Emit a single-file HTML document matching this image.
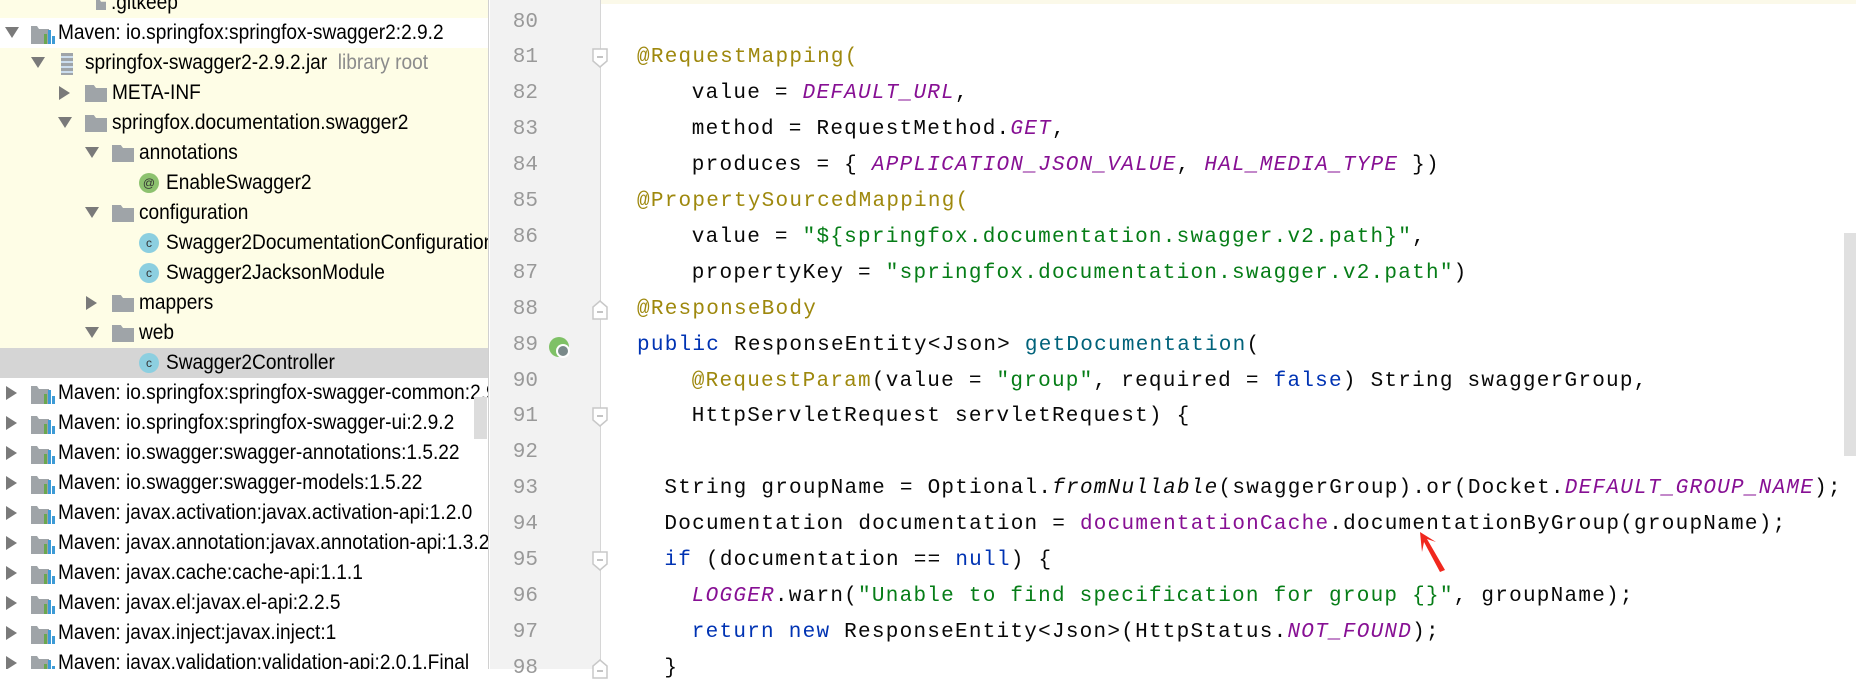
<!DOCTYPE html>
<html><head><meta charset="utf-8"><style>
*{margin:0;padding:0;box-sizing:border-box}
body{width:1856px;height:669px;overflow:hidden;background:#fff;position:relative;font-family:"Liberation Sans",sans-serif}
#tree{position:absolute;left:0;top:0;width:489px;height:669px;background:#fff;overflow:hidden;border-right:1px solid #d0d0d0}
.row{position:absolute;left:0;width:489px;height:30px}
.y{background:#fefde6}
.sel{background:#d5d5d5}
.t{position:absolute;top:2px;font-size:21px;line-height:26px;white-space:nowrap;transform:scaleX(.91);transform-origin:0 50%;color:#000}
.arr{position:absolute;top:9px;width:0;height:0}
.ad{border-left:7px solid transparent;border-right:7px solid transparent;border-top:11px solid #7a7a7a}
.ar{border-top:7px solid transparent;border-bottom:7px solid transparent;border-left:11px solid #7a7a7a;top:8px}
.fold{position:absolute;top:7px;width:22px;height:17px;background:#9fa4a8;clip-path:polygon(0 0,40% 0,50% 18%,100% 18%,100% 100%,0 100%)}
.mv{position:absolute;top:6px;width:24px;height:20px}
.ci{position:absolute;top:5px;width:20px;height:20px;border-radius:50%;background:#8ccfe0;font-size:12px;line-height:20px;text-align:center;color:#333}
.ai{background:#8dc26f}
#gut{position:absolute;left:490px;top:0;width:111px;height:669px;background:#f2f2f2;border-right:1px solid #d6d6d6}
.ln{position:absolute;left:490px;width:48px;text-align:right;font-family:"Liberation Mono",monospace;font-size:21px;color:#999;height:36px;line-height:36px}
.fm{position:absolute;left:592px}
.code{position:absolute;font-family:"Liberation Mono",monospace;font-size:21px;letter-spacing:1.25px;white-space:pre;height:36px;line-height:36px;color:#080808}
.an{color:#9e880d}.pu{color:#871094;font-style:italic}.pn{color:#871094}.st{color:#067d17}.kw{color:#0033b3}.fn{color:#00627a}
</style></head><body>
<div style="position:absolute;left:601px;top:0;width:1255px;height:4px;background:#fbf9e9"></div>
<div id="tree">
<div class="row y" style="top:-12px"><div class="fold" style="left:96px;width:10px;height:10px;top:12px"></div><div class="t" style="left:111px">.gitkeep</div></div>
<div class="row" style="top:18px"><div class="arr ad" style="left:5px"></div><svg class="mv" style="left:31px" viewBox="0 0 24 20"><path d="M0 2h6l2 3h10v15H0z" fill="#9fa4a8"/><rect x="13" y="10" width="3" height="10" fill="#6aa84f"/><rect x="17" y="6" width="3" height="14" fill="#3d9bd6"/><rect x="21" y="12" width="3" height="8" fill="#3d9bd6"/></svg><div class="t" style="left:58px">Maven: io.springfox:springfox-swagger2:2.9.2</div></div>
<div class="row y" style="top:48px"><div class="arr ad" style="left:31px"></div><div style="position:absolute;left:61px;top:5px;width:12px;height:22px;background:repeating-linear-gradient(#9fa4a8 0 3px,#cde 3px 5px)"></div><div class="t" style="left:85px">springfox-swagger2-2.9.2.jar&nbsp; <span style="color:#8c8c8c">library root</span></div></div>
<div class="row y" style="top:78px"><div class="arr ar" style="left:59px"></div><div class="fold" style="left:85px"></div><div class="t" style="left:112px">META-INF</div></div>
<div class="row y" style="top:108px"><div class="arr ad" style="left:58px"></div><div class="fold" style="left:85px"></div><div class="t" style="left:112px">springfox.documentation.swagger2</div></div>
<div class="row y" style="top:138px"><div class="arr ad" style="left:85px"></div><div class="fold" style="left:112px"></div><div class="t" style="left:139px">annotations</div></div>
<div class="row y" style="top:168px"><div class="ci ai" style="left:139px">@</div><div class="t" style="left:166px">EnableSwagger2</div></div>
<div class="row y" style="top:198px"><div class="arr ad" style="left:85px"></div><div class="fold" style="left:112px"></div><div class="t" style="left:139px">configuration</div></div>
<div class="row y" style="top:228px"><div class="ci" style="left:139px">c</div><div class="t" style="left:166px">Swagger2DocumentationConfiguration</div></div>
<div class="row y" style="top:258px"><div class="ci" style="left:139px">c</div><div class="t" style="left:166px">Swagger2JacksonModule</div></div>
<div class="row y" style="top:288px"><div class="arr ar" style="left:86px"></div><div class="fold" style="left:112px"></div><div class="t" style="left:139px">mappers</div></div>
<div class="row y" style="top:318px"><div class="arr ad" style="left:85px"></div><div class="fold" style="left:112px"></div><div class="t" style="left:139px">web</div></div>
<div class="row sel" style="top:348px"><div class="ci" style="left:139px">c</div><div class="t" style="left:166px">Swagger2Controller</div></div>
<div id="mrows"></div>
<div style="position:absolute;left:474px;top:397px;width:13px;height:42px;background:#dcdcdc"></div>
</div>
<div id="gut"></div>
<div style="position:absolute;left:1844px;top:233px;width:12px;height:223px;background:#e0e0e0"></div>
<svg style="position:absolute;left:1418px;top:530px" width="40" height="45" viewBox="0 0 40 45"><path d="M9 9 L27 40 L22 42 L6 12 L4 22 L2 2 L18 12 Z" fill="#f0281e"/></svg>
<svg style="position:absolute;left:548px;top:336px" width="24" height="24" viewBox="0 0 24 24"><circle cx="11" cy="11" r="10" fill="#7fc166"/><circle cx="15" cy="15" r="7" fill="#fff"/><circle cx="15" cy="15" r="5" fill="#7a8a8a"/></svg>
<script>
var mv=["Maven: io.springfox:springfox-swagger-common:2.9.2","Maven: io.springfox:springfox-swagger-ui:2.9.2","Maven: io.swagger:swagger-annotations:1.5.22","Maven: io.swagger:swagger-models:1.5.22","Maven: javax.activation:javax.activation-api:1.2.0","Maven: javax.annotation:javax.annotation-api:1.3.2","Maven: javax.cache:cache-api:1.1.1","Maven: javax.el:javax.el-api:2.2.5","Maven: javax.inject:javax.inject:1","Maven: javax.validation:validation-api:2.0.1.Final"];
var h="";mv.forEach(function(s,i){h+='<div class="row" style="top:'+(378+30*i)+'px"><div class="arr ar" style="left:6px"></div><svg class="mv" style="left:31px" viewBox="0 0 24 20"><path d="M0 2h6l2 3h10v15H0z" fill="#9fa4a8"/><rect x="13" y="10" width="3" height="10" fill="#6aa84f"/><rect x="17" y="6" width="3" height="14" fill="#3d9bd6"/><rect x="21" y="12" width="3" height="8" fill="#3d9bd6"/></svg><div class="t" style="left:58px">'+s+'</div></div>'});
document.getElementById("mrows").innerHTML=h;
var L={
80:[0,''],
81:[0,'<span class="an">@RequestMapping(</span>'],
82:[4,'value = <span class="pu">DEFAULT_URL</span>,'],
83:[4,'method = RequestMethod.<span class="pu">GET</span>,'],
84:[4,'produces = { <span class="pu">APPLICATION_JSON_VALUE</span>, <span class="pu">HAL_MEDIA_TYPE</span> })'],
85:[0,'<span class="an">@PropertySourcedMapping(</span>'],
86:[4,'value = <span class="st">"${springfox.documentation.swagger.v2.path}"</span>,'],
87:[4,'propertyKey = <span class="st">"springfox.documentation.swagger.v2.path"</span>)'],
88:[0,'<span class="an">@ResponseBody</span>'],
89:[0,'<span class="kw">public</span> ResponseEntity&lt;Json&gt; <span class="fn">getDocumentation</span>('],
90:[4,'<span class="an">@RequestParam</span>(value = <span class="st">"group"</span>, required = <span class="kw">false</span>) String swaggerGroup,'],
91:[4,'HttpServletRequest servletRequest) {'],
92:[0,''],
93:[2,'String groupName = Optional.<i>fromNullable</i>(swaggerGroup).or(Docket.<span class="pu">DEFAULT_GROUP_NAME</span>);'],
94:[2,'Documentation documentation = <span class="pn">documentationCache</span>.documentationByGroup(groupName);'],
95:[2,'<span class="kw">if</span> (documentation == <span class="kw">null</span>) {'],
96:[4,'<span class="pu">LOGGER</span>.warn(<span class="st">"Unable to find specification for group {}"</span>, groupName);'],
97:[4,'<span class="kw">return new</span> ResponseEntity&lt;Json&gt;(HttpStatus.<span class="pu">NOT_FOUND</span>);'],
98:[2,'}']};
var o="";for(var n=80;n<=98;n++){var y=Math.round(4.5+35.9*(n-80));o+='<div class="ln" style="top:'+y+'px">'+n+'</div>';o+='<div class="code" style="top:'+y+'px;left:'+(637+13.7*L[n][0])+'px">'+L[n][1]+'</div>';}
[81,88,91,95,98].forEach(function(n){var y=Math.round(4.5+35.9*(n-80))+8;var up=(n==88||n==98);o+='<svg class="fm" style="top:'+y+'px" width="16" height="20" viewBox="0 0 16 20"><path d="'+(up?'M1 19V7L8 1L15 7V19Z':'M1 1H15V13L8 19L1 13Z')+'" fill="#fff" stroke="#c8c8c8" stroke-width="1.5"/><path d="M5 '+(up?12:9)+'H11" stroke="#b0b0b0" stroke-width="1.5"/></svg>'});
document.body.insertAdjacentHTML("beforeend",o);
</script>
</body></html>
